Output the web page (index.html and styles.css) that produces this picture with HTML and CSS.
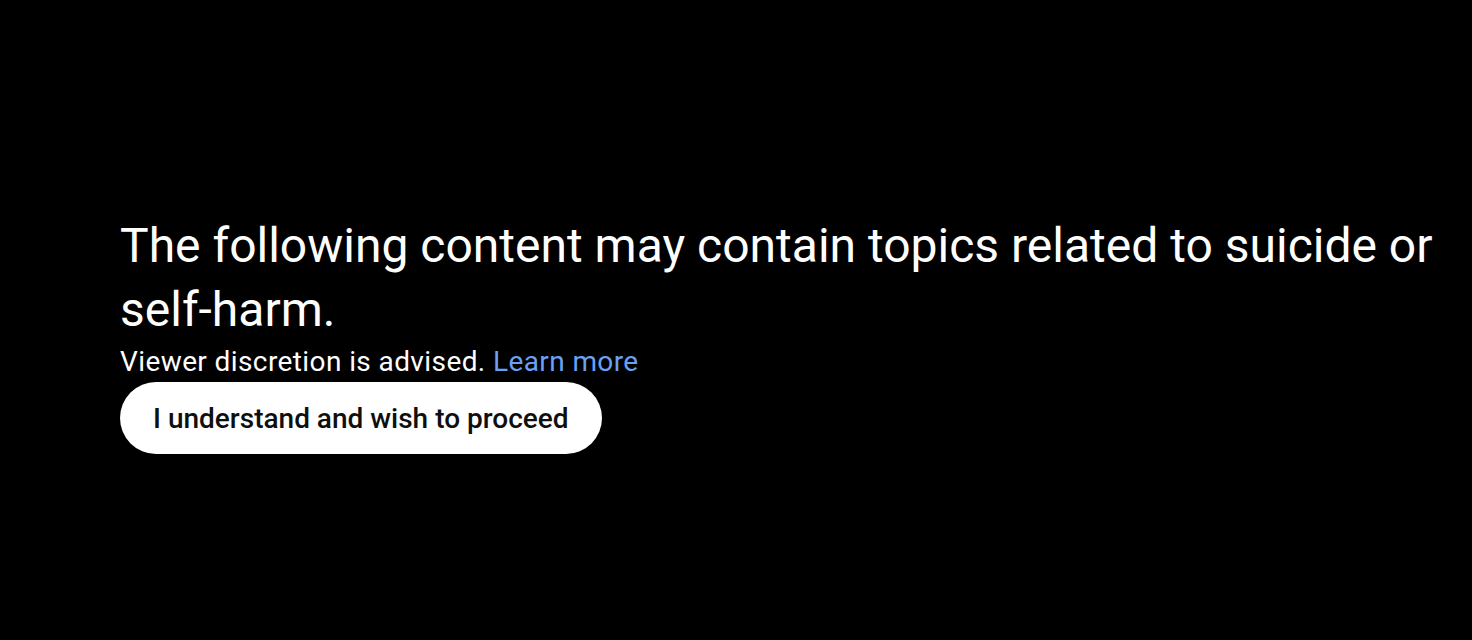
FILE: index.html
```html
<!DOCTYPE html>
<html lang="en">
<head>
<meta charset="utf-8">
<title>Content warning</title>
<link rel="stylesheet" href="styles.css">
</head>
<body>
<main class="warning">
  <div class="content">
    <h1 class="title">The following content may contain topics related to suicide or self-harm.</h1>
    <p class="subtitle">Viewer discretion is advised. <a class="link" href="#">Learn more</a></p>
    <button class="proceed" type="button">I understand and wish to proceed</button>
  </div>
</main>
</body>
</html>
```

FILE: styles.css
```css
html, body {
  margin: 0;
  padding: 0;
  background: #000;
  height: 100%;
}
body {
  font-family: Roboto, "Noto Sans", sans-serif;
  color: #fff;
}
.warning {
  height: 640px;
  display: flex;
  align-items: center;
  padding-left: 120px;
  padding-right: 30px;
  box-sizing: border-box;
}
.content {
  display: flex;
  flex-direction: column;
  align-items: flex-start;
  padding-top: 28px;
}
.title {
  margin: 0;
  font-size: 48px;
  font-weight: 400;
  line-height: 64px;
}
.subtitle {
  margin: 0;
  font-size: 28px;
  line-height: 40px;
  letter-spacing: 0.4px;
}
.link {
  color: #6aa1f4;
  text-decoration: none;
}
.proceed {
  height: 72px;
  padding: 0 33px;
  border: none;
  border-radius: 36px;
  background: #fff;
  color: #0f0f0f;
  font-family: Roboto, "Noto Sans", sans-serif;
  font-size: 28px;
  font-weight: 500;
}
```
